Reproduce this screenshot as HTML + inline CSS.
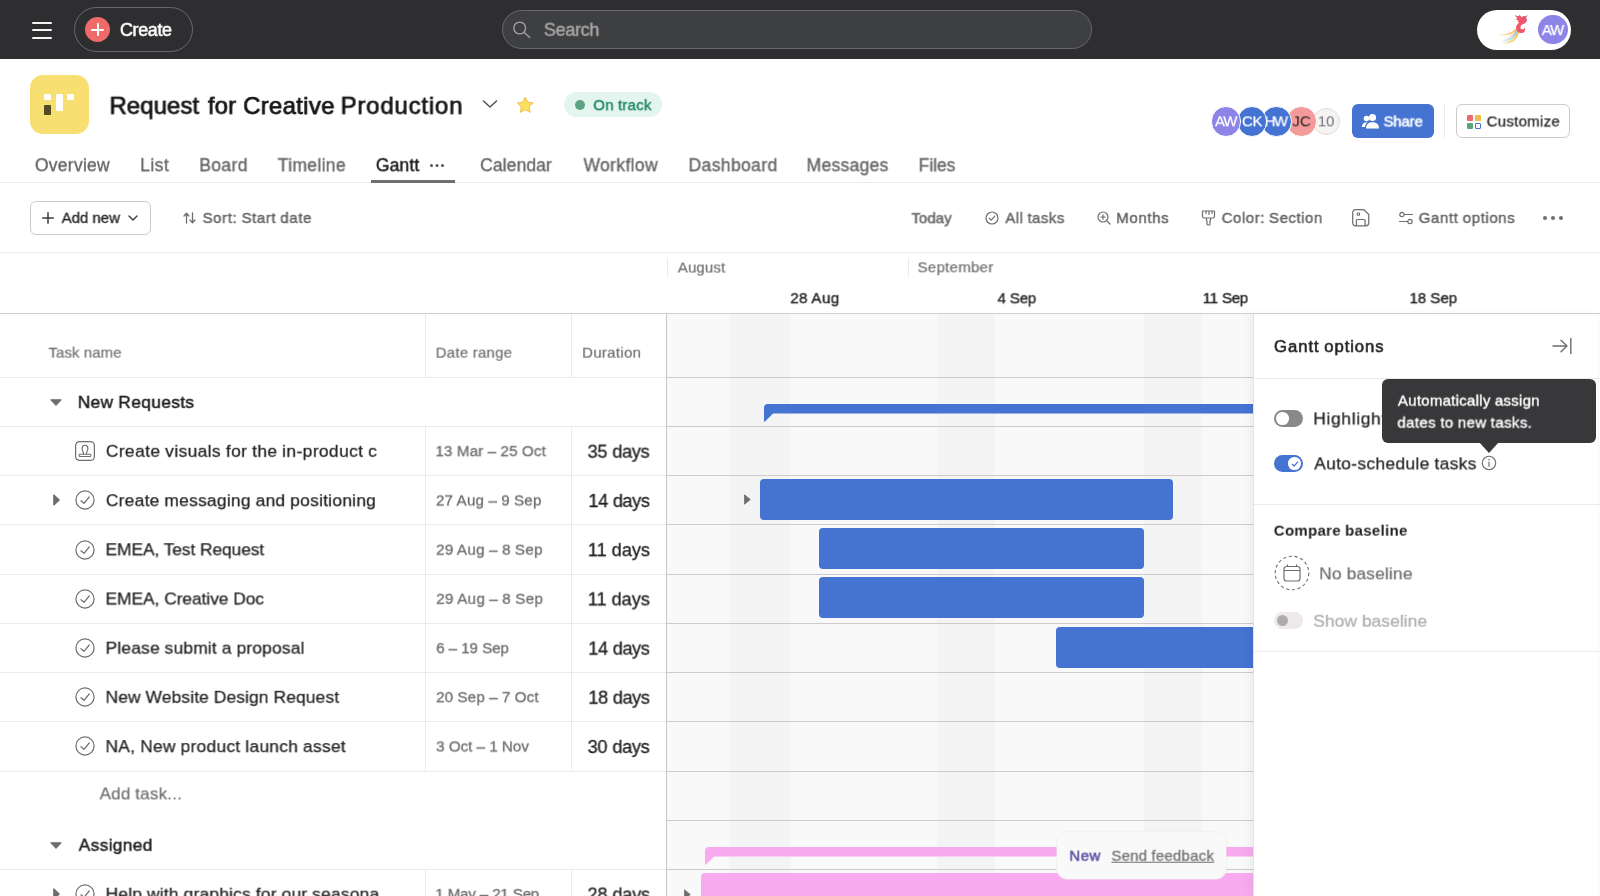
<!DOCTYPE html>
<html lang="en"><head><meta charset="utf-8"><title>Request for Creative Production – Gantt</title>
<style>
*{box-sizing:border-box;margin:0;padding:0}
html,body{width:1600px;height:896px;overflow:hidden;background:#fff;font-family:"Liberation Sans",sans-serif;}
.a{position:absolute}
.t{will-change:transform;position:absolute;white-space:nowrap;line-height:20px;height:20px;z-index:12}
#topbar{position:absolute;left:0;top:0;width:1600px;height:59px;background:#2e2e30}
.hl{position:absolute;height:1px;background:#ebe9e9}
.vl{position:absolute;width:1px;background:#ebe9e9}
.bar{position:absolute;background:#4573d2;border-radius:4px}
.av{position:absolute;border-radius:50%;border:1px solid #fff}
.tog{position:absolute;width:29.2px;height:16.8px;border-radius:9px}
.tog i{position:absolute;top:2.1px;width:12.6px;height:12.6px;border-radius:50%;background:#fff}
svg{position:absolute;overflow:visible}

</style></head>
<body>
<!-- TOP BAR -->
<div id="topbar">
  <div class="a" style="left:32px;top:22.2px;width:20px;height:1.9px;background:#f5f4f3;border-radius:1px"></div>
  <div class="a" style="left:32px;top:29.1px;width:20px;height:1.9px;background:#f5f4f3;border-radius:1px"></div>
  <div class="a" style="left:32px;top:36.7px;width:20px;height:1.9px;background:#f5f4f3;border-radius:1px"></div>
  <div class="a" style="left:74px;top:7px;width:119px;height:45px;border:1px solid #6a696a;border-radius:23px"></div>
  <div class="a" style="left:85px;top:17.2px;width:25px;height:25px;border-radius:50%;background:#f06a6a"></div>
  <div class="a" style="left:91.2px;top:28.7px;width:12.6px;height:2px;background:#fff;border-radius:1px"></div>
  <div class="a" style="left:96.5px;top:23.4px;width:2px;height:12.6px;background:#fff;border-radius:1px"></div>
  <div class="a" style="left:502px;top:10px;width:590px;height:39px;border:1px solid #69696b;border-radius:20px;background:#3e3f41"></div>
  <svg style="left:512px;top:20px" width="20" height="20" viewBox="0 0 20 20"><circle cx="7.7" cy="8" r="5.9" fill="none" stroke="#a2a0a2" stroke-width="1.4"/><path d="M12 12.3 L17.7 17.4" stroke="#a2a0a2" stroke-width="1.4" stroke-linecap="round"/></svg>
  <div class="a" style="left:1477px;top:9.5px;width:94px;height:40px;border-radius:20px;background:#fff"></div>
  <svg style="left:1490px;top:10px" width="45" height="38" viewBox="1490 10 45 38">
    <defs>
      <linearGradient id="tg1" x1="1518" y1="0" x2="1496" y2="0" gradientUnits="userSpaceOnUse"><stop offset="0" stop-color="#f6b24a"/><stop offset="0.55" stop-color="#f9cf7c" stop-opacity="0.75"/><stop offset="1" stop-color="#fbe3b0" stop-opacity="0"/></linearGradient>
      <linearGradient id="tg2" x1="1518" y1="0" x2="1500" y2="0" gradientUnits="userSpaceOnUse"><stop offset="0" stop-color="#7fd0c4"/><stop offset="0.6" stop-color="#a5ddee" stop-opacity="0.7"/><stop offset="1" stop-color="#c9ecf5" stop-opacity="0"/></linearGradient>
      <linearGradient id="tg3" x1="1519" y1="0" x2="1502" y2="0" gradientUnits="userSpaceOnUse"><stop offset="0" stop-color="#f3c14f"/><stop offset="0.6" stop-color="#f7d67e" stop-opacity="0.8"/><stop offset="1" stop-color="#fbe9b8" stop-opacity="0"/></linearGradient>
      <linearGradient id="tg4" x1="1518" y1="0" x2="1504" y2="0" gradientUnits="userSpaceOnUse"><stop offset="0" stop-color="#f58aa0"/><stop offset="1" stop-color="#f9b9c5" stop-opacity="0"/></linearGradient>
    </defs>
    <path d="M1517.6 27.5 Q1512 36.5 1497 34.5" fill="none" stroke="url(#tg1)" stroke-width="1.8" stroke-linecap="round"/>
    <path d="M1517.4 29.5 Q1513 38.5 1502 38.8" fill="none" stroke="url(#tg4)" stroke-width="1.5" stroke-linecap="round"/>
    <path d="M1517.6 30.8 Q1514.5 40 1503 40.8" fill="none" stroke="url(#tg2)" stroke-width="1.8" stroke-linecap="round"/>
    <path d="M1518.2 32 Q1516.5 42 1504.5 43" fill="none" stroke="url(#tg3)" stroke-width="1.8" stroke-linecap="round"/>
    <path d="M1528.1 15.3 L1526 17.4 Q1527.6 19.6 1526.6 21.6 Q1525.4 23.6 1522.8 24.2 Q1520.6 24.8 1520.4 27.2 Q1520.4 29.6 1522.2 29.6 Q1523.8 29.4 1524.6 27.8 Q1525.8 30.6 1523.6 32.4 Q1520.6 34 1518 32 Q1515.2 29 1516.6 25.6 Q1517.6 23.4 1519.4 22.2 L1517.2 21.4 L1518.4 20.4 L1515.6 19.2 L1517.4 18.2 L1514.7 15.3 L1518.8 16.2 L1519.4 14.8 L1521.8 17.2 Q1523.2 15.8 1525.2 16.2 Z" fill="#f0566a"/>
    <circle cx="1524.3" cy="17.6" r="0.7" fill="#5b6fd6"/>
  </svg>
  <div class="a" style="left:1538.3px;top:14.7px;width:29.8px;height:29.8px;border-radius:50%;background:#8d84e8"></div>
</div>
<!-- HEADER -->
<div class="a" style="left:30px;top:75px;width:59px;height:59px;border-radius:13px;background:#f8df72"></div>
<div class="a" style="left:44.2px;top:105px;width:7.2px;height:10.3px;background:#544a25;border-radius:1px"></div>
<div class="a" style="left:44.2px;top:93.5px;width:7.2px;height:6.6px;background:#fff;border-radius:1px"></div>
<div class="a" style="left:55.5px;top:93.5px;width:7.2px;height:17.5px;background:#fff;border-radius:1px"></div>
<div class="a" style="left:66.8px;top:93.5px;width:7.2px;height:6.6px;background:#fff;border-radius:1px"></div>
<svg style="left:482px;top:98px" width="16" height="12" viewBox="0 0 16 12"><path d="M1.5 3 L8 9 L14.5 3" fill="none" stroke="#565557" stroke-width="1.6" stroke-linecap="round" stroke-linejoin="round"/></svg>
<svg style="left:515.5px;top:96px" width="18.5" height="18" viewBox="0 0 20 20"><path d="M10 1.2 L12.7 6.9 L18.9 7.7 L14.4 12 L15.5 18.2 L10 15.2 L4.5 18.2 L5.6 12 L1.1 7.7 L7.3 6.9 Z" fill="#fbe05f" stroke="#f0c04a" stroke-width="1.1" stroke-linejoin="round"/></svg>
<div class="a" style="left:564px;top:92px;width:98px;height:25px;border-radius:13px;background:#e4f4ee"></div>
<div class="a" style="left:575px;top:100px;width:10px;height:10px;border-radius:50%;background:#5da283"></div>
<!-- avatars -->
<div class="av" style="left:1312.5px;top:107.5px;width:27px;height:27px;background:#f5f4f3;border:1px solid #dedcdb;z-index:12"></div>
<div class="av" style="left:1286px;top:106px;width:30.5px;height:30.5px;background:#f49a9a;border-width:1.5px;z-index:14"></div>
<div class="av" style="left:1261px;top:106px;width:30.5px;height:30.5px;background:#4573d2;border-width:1.5px;z-index:16"></div>
<div class="av" style="left:1236.5px;top:106px;width:30.5px;height:30.5px;background:#4573d2;border-width:1.5px;z-index:18"></div>
<div class="av" style="left:1210.7px;top:106px;width:30.5px;height:30.5px;background:#8d84e8;border-width:1.5px;z-index:20"></div>
<div class="a" style="left:1352px;top:103.8px;width:82.3px;height:34.2px;border-radius:6px;background:#4573d2"></div>
<svg style="left:1362px;top:113px" width="17" height="16" viewBox="0 0 17 16"><circle cx="10.5" cy="4.5" r="3.6" fill="#fff"/><path d="M4 15.5 C4 11 7 9.3 10.5 9.3 C14 9.3 17 11 17 15.5 Z" fill="#fff"/><circle cx="4.5" cy="5.5" r="2.8" fill="#fff"/><path d="M0 14 C0 10.5 2 9.2 5.5 9.2 C4 10.5 3 12 3 14 Z" fill="#fff"/></svg>
<div class="vl" style="left:1444px;top:104px;height:34px"></div>
<div class="a" style="left:1455.8px;top:103.8px;width:114.4px;height:34.2px;border-radius:6px;border:1px solid #cfcbcb;background:#fff"></div>
<div class="a" style="left:1467px;top:115px;width:6px;height:6px;background:#f06a6a;border-radius:1px"></div>
<div class="a" style="left:1475px;top:115px;width:6px;height:6px;background:#f1bd4a;border-radius:1px"></div>
<div class="a" style="left:1467px;top:123px;width:6px;height:6px;background:#5da283;border-radius:1px"></div>
<div class="a" style="left:1475px;top:123px;width:6px;height:6px;border:1.5px solid #4573d2;border-radius:1px"></div>
<!-- tabs -->
<div class="a" style="left:430px;top:164px;width:3px;height:3px;border-radius:50%;background:#565557;box-shadow:5.5px 0 0 #565557,11px 0 0 #565557"></div>
<div class="hl" style="left:0;top:182.3px;width:1600px"></div>
<div class="a" style="left:370.5px;top:180.4px;width:84.2px;height:2.7px;background:#6d6e6f"></div>
<!-- TOOLBAR -->
<div class="a" style="left:30px;top:201px;width:121px;height:34px;border:1px solid #cfcbcb;border-radius:6px"></div>
<svg style="left:42px;top:212px" width="12" height="12" viewBox="0 0 12 12"><path d="M6 0.7 V11.3 M0.7 6 H11.3" stroke="#3a3b3d" stroke-width="1.5" stroke-linecap="round"/></svg>
<svg style="left:128px;top:214px" width="10" height="8" viewBox="0 0 10 8"><path d="M1 2 L5 6 L9 2" fill="none" stroke="#3a3b3d" stroke-width="1.4" stroke-linecap="round" stroke-linejoin="round"/></svg>
<svg style="left:183px;top:212px" width="13" height="12" viewBox="0 0 13 12"><path d="M3.5 11 V1.5 M1 4 L3.5 1.2 L6 4 M9.5 1 V10.5 M7 8 L9.5 10.8 L12 8" fill="none" stroke="#6d6e6f" stroke-width="1.3" stroke-linecap="round" stroke-linejoin="round"/></svg>
<svg style="left:985px;top:211px" width="14" height="14" viewBox="0 0 14 14"><circle cx="7" cy="7" r="6" fill="none" stroke="#6d6e6f" stroke-width="1.2"/><path d="M4.3 7.2 L6.3 9.1 L9.8 5.2" fill="none" stroke="#6d6e6f" stroke-width="1.2" stroke-linecap="round" stroke-linejoin="round"/></svg>
<svg style="left:1097px;top:211px" width="14" height="14" viewBox="0 0 14 14"><circle cx="6" cy="6" r="5" fill="none" stroke="#6d6e6f" stroke-width="1.2"/><path d="M9.7 9.7 L13 13 M6 3.8 V8.2 M3.8 6 H8.2" fill="none" stroke="#6d6e6f" stroke-width="1.2" stroke-linecap="round"/></svg>
<svg style="left:1201px;top:210px" width="15" height="16" viewBox="0 0 15 16"><path d="M1.5 1 H13.5 V6.5 Q13.5 8 12 8 H3 Q1.5 8 1.5 6.5 Z M5.5 8 V10 Q5.5 10.8 6 11 V14 Q6 15 7.5 15 Q9 15 9 14 V11 Q9.5 10.8 9.5 10 V8 M5 1 V3.5 M8 1 V4.5 M11 1 V3.5" fill="none" stroke="#6d6e6f" stroke-width="1.2" stroke-linejoin="round" stroke-linecap="round"/></svg>
<svg style="left:1352px;top:209.3px" width="17.5" height="17.5" viewBox="0 0 17 17"><path d="M0.7 3.7 Q0.7 0.7 3.7 0.7 H11.6 L16.3 5.4 V13.3 Q16.3 16.3 13.3 16.3 H3.7 Q0.7 16.3 0.7 13.3 Z M4.3 16.2 V11.2 Q4.3 10.2 5.3 10.2 H11.7 Q12.7 10.2 12.7 11.2 V16.2" fill="none" stroke="#6d6e6f" stroke-width="1.2" stroke-linejoin="round"/><rect x="5.1" y="3.9" width="2.2" height="2.2" rx="0.4" fill="none" stroke="#6d6e6f" stroke-width="1"/></svg>
<svg style="left:1399px;top:211px" width="14" height="14" viewBox="0 0 14 14"><path d="M5.5 3.5 H13.5 M0.5 10.5 H8.5" stroke="#6d6e6f" stroke-width="1.2" stroke-linecap="round"/><circle cx="3" cy="3.5" r="2.2" fill="none" stroke="#6d6e6f" stroke-width="1.2"/><circle cx="11" cy="10.5" r="2.2" fill="none" stroke="#6d6e6f" stroke-width="1.2"/></svg>
<div class="a" style="left:1543px;top:216px;width:4px;height:4px;border-radius:50%;background:#6d6e6f;box-shadow:8px 0 0 #6d6e6f,16px 0 0 #6d6e6f"></div>
<div class="hl" style="left:0;top:252px;width:1600px"></div>
<!-- TIMELINE HEADER -->
<div class="vl" style="left:667.3px;top:257.5px;height:18.5px"></div>
<div class="vl" style="left:908.3px;top:257.5px;height:18.5px"></div>
<div class="hl" style="left:0;top:313.2px;width:1600px;background:#cfcdcd;height:1.2px"></div>
<!-- GANTT AREA -->
<div class="a" id="gantt" style="left:667px;top:314px;width:587px;height:582px;background:#faf9f9;overflow:hidden">
  <div class="a" style="left:63.3px;top:0;width:59.7px;height:582px;background:#f5f4f4"></div>
  <div class="a" style="left:270.3px;top:0;width:58px;height:582px;background:#f5f4f4"></div>
  <div class="a" style="left:476.8px;top:0;width:58.4px;height:582px;background:#f5f4f4"></div>
</div>
<!-- TABLE LINES -->
<div class="vl" style="left:425px;top:314px;height:64px"></div>
<div class="vl" style="left:571px;top:314px;height:64px"></div>
<div class="vl" style="left:425px;top:427px;height:344px"></div>
<div class="vl" style="left:571px;top:427px;height:344px"></div>
<div class="vl" style="left:425px;top:870px;height:26px"></div>
<div class="vl" style="left:571px;top:870px;height:26px"></div>
<div class="hl" style="left:0;top:377px;width:1254px"></div>
<div class="hl" style="left:0;top:426px;width:1254px"></div>
<div class="hl" style="left:0;top:475px;width:1254px"></div>
<div class="hl" style="left:0;top:524px;width:1254px"></div>
<div class="hl" style="left:0;top:573.5px;width:1254px"></div>
<div class="hl" style="left:0;top:623px;width:1254px"></div>
<div class="hl" style="left:0;top:672px;width:1254px"></div>
<div class="hl" style="left:0;top:721px;width:1254px"></div>
<div class="hl" style="left:0;top:770.5px;width:1254px"></div>
<div class="hl" style="left:667px;top:819.5px;width:587px"></div>
<div class="hl" style="left:0;top:869px;width:1254px"></div>
<div class="hl" style="left:667px;top:377px;width:587px;background:#cdcbcb"></div>
<div class="hl" style="left:667px;top:426px;width:587px;background:#cdcbcb"></div>
<div class="hl" style="left:667px;top:475px;width:587px;background:#cdcbcb"></div>
<div class="hl" style="left:667px;top:524px;width:587px;background:#cdcbcb"></div>
<div class="hl" style="left:667px;top:573.5px;width:587px;background:#cdcbcb"></div>
<div class="hl" style="left:667px;top:623px;width:587px;background:#cdcbcb"></div>
<div class="hl" style="left:667px;top:672px;width:587px;background:#cdcbcb"></div>
<div class="hl" style="left:667px;top:721px;width:587px;background:#cdcbcb"></div>
<div class="hl" style="left:667px;top:770.5px;width:587px;background:#cdcbcb"></div>
<div class="hl" style="left:667px;top:819.5px;width:587px;background:#cdcbcb"></div>
<div class="hl" style="left:667px;top:869px;width:587px;background:#cdcbcb"></div>
<div class="vl" style="left:666px;top:314px;height:582px;background:#c9c7c7;width:1px"></div>
<!-- GANTT BARS -->
<svg style="left:764px;top:404px" width="490" height="18" viewBox="0 0 490 18"><path d="M0 4 Q0 0 4 0 H490 V9.5 H9 L1 17.5 Q0 18 0 17 Z" fill="#4573d2"/></svg>
<div class="bar" style="left:760px;top:479px;width:413px;height:41px"></div>
<div class="bar" style="left:819px;top:528px;width:325px;height:41px"></div>
<div class="bar" style="left:819px;top:577px;width:325px;height:41px"></div>
<div class="bar" style="left:1056px;top:627px;width:198px;height:41px;border-radius:4px 0 0 4px"></div>
<svg style="left:705px;top:847.3px" width="549" height="18" viewBox="0 0 549 18"><path d="M0 4 Q0 0 4 0 H549 V9.5 H9 L1 17.5 Q0 18 0 17 Z" fill="#f9aaef"/></svg>
<div class="bar" style="left:700.5px;top:873px;width:553.5px;height:41px;border-radius:4px 0 0 4px;background:#f9aaef"></div>
<svg style="left:743.7px;top:494.3px" width="7" height="11" viewBox="0 0 7 11"><path d="M0.5 0.8 L6.3 5.5 L0.5 10.2 Z" fill="#6d6e6f" stroke="#6d6e6f" stroke-width="0.8" stroke-linejoin="round"/></svg>
<svg style="left:684px;top:888.5px" width="7" height="11" viewBox="0 0 7 11"><path d="M0.5 0.8 L6.3 5.5 L0.5 10.2 Z" fill="#6d6e6f" stroke="#6d6e6f" stroke-width="0.8" stroke-linejoin="round"/></svg>
<!-- ROW ICONS -->
<svg style="left:50px;top:398.9px" width="12" height="7" viewBox="0 0 12 7"><path d="M1 0.8 H11 L6 6.2 Z" fill="#6d6e6f" stroke="#6d6e6f" stroke-width="1.2" stroke-linejoin="round"/></svg>
<svg style="left:50px;top:842.2px" width="12" height="7" viewBox="0 0 12 7"><path d="M1 0.8 H11 L6 6.2 Z" fill="#6d6e6f" stroke="#6d6e6f" stroke-width="1.2" stroke-linejoin="round"/></svg>
<svg style="left:75px;top:441.2px" width="20" height="20" viewBox="0 0 20 20"><rect x="0.6" y="0.6" width="18.8" height="18.8" rx="4" fill="none" stroke="#6d6e6f" stroke-width="1.2"/><path d="M8.6 13.2 C8.6 11 7.1 9.6 7.1 7.4 C7.1 5.5 8.3 4.3 10 4.3 C11.7 4.3 12.9 5.5 12.9 7.4 C12.9 9.6 11.4 11 11.4 13.2 M4.2 13.8 Q4.2 13.2 4.8 13.2 H15.2 Q15.8 13.2 15.8 13.8 V14.9 Q15.8 15.5 15.2 15.5 H4.8 Q4.2 15.5 4.2 14.9 Z" fill="none" stroke="#6d6e6f" stroke-width="1.1" stroke-linejoin="round"/></svg>
<svg style="left:74.8px;top:490.3px" width="20" height="20" viewBox="0 0 20 20"><circle cx="10" cy="10" r="9.1" fill="none" stroke="#6d6e6f" stroke-width="1.2"/><path d="M6 10.7 L9 13.3 L14.2 7" fill="none" stroke="#6d6e6f" stroke-width="1.2" stroke-linecap="round" stroke-linejoin="round"/></svg>
<svg style="left:74.8px;top:539.5px" width="20" height="20" viewBox="0 0 20 20"><circle cx="10" cy="10" r="9.1" fill="none" stroke="#6d6e6f" stroke-width="1.2"/><path d="M6 10.7 L9 13.3 L14.2 7" fill="none" stroke="#6d6e6f" stroke-width="1.2" stroke-linecap="round" stroke-linejoin="round"/></svg>
<svg style="left:74.8px;top:588.7px" width="20" height="20" viewBox="0 0 20 20"><circle cx="10" cy="10" r="9.1" fill="none" stroke="#6d6e6f" stroke-width="1.2"/><path d="M6 10.7 L9 13.3 L14.2 7" fill="none" stroke="#6d6e6f" stroke-width="1.2" stroke-linecap="round" stroke-linejoin="round"/></svg>
<svg style="left:74.8px;top:637.9px" width="20" height="20" viewBox="0 0 20 20"><circle cx="10" cy="10" r="9.1" fill="none" stroke="#6d6e6f" stroke-width="1.2"/><path d="M6 10.7 L9 13.3 L14.2 7" fill="none" stroke="#6d6e6f" stroke-width="1.2" stroke-linecap="round" stroke-linejoin="round"/></svg>
<svg style="left:74.8px;top:687.1px" width="20" height="20" viewBox="0 0 20 20"><circle cx="10" cy="10" r="9.1" fill="none" stroke="#6d6e6f" stroke-width="1.2"/><path d="M6 10.7 L9 13.3 L14.2 7" fill="none" stroke="#6d6e6f" stroke-width="1.2" stroke-linecap="round" stroke-linejoin="round"/></svg>
<svg style="left:74.8px;top:736.3px" width="20" height="20" viewBox="0 0 20 20"><circle cx="10" cy="10" r="9.1" fill="none" stroke="#6d6e6f" stroke-width="1.2"/><path d="M6 10.7 L9 13.3 L14.2 7" fill="none" stroke="#6d6e6f" stroke-width="1.2" stroke-linecap="round" stroke-linejoin="round"/></svg>
<svg style="left:74.8px;top:883.9px" width="20" height="20" viewBox="0 0 20 20"><circle cx="10" cy="10" r="9.1" fill="none" stroke="#6d6e6f" stroke-width="1.2"/><path d="M6 10.7 L9 13.3 L14.2 7" fill="none" stroke="#6d6e6f" stroke-width="1.2" stroke-linecap="round" stroke-linejoin="round"/></svg>
<svg style="left:53px;top:494.3px" width="7" height="12" viewBox="0 0 7 12"><path d="M0.8 1 V11 L6.2 6 Z" fill="#6d6e6f" stroke="#6d6e6f" stroke-width="1.2" stroke-linejoin="round"/></svg>
<svg style="left:53px;top:887.9px" width="7" height="12" viewBox="0 0 7 12"><path d="M0.8 1 V11 L6.2 6 Z" fill="#6d6e6f" stroke="#6d6e6f" stroke-width="1.2" stroke-linejoin="round"/></svg>
<!-- OPTIONS PANEL -->
<div class="a" id="panel" style="left:1254px;top:314px;width:346px;height:582px;background:#fff;box-shadow:-1px 0 0 #e4e2e2,-4px 0 8px rgba(0,0,0,0.05);z-index:10"></div>
<div class="a" style="left:0;top:313.2px;width:1600px;height:1.2px;background:#cfcdcd;z-index:11"></div>
<div class="hl" style="left:1254px;top:378px;width:346px;z-index:11"></div>
<div class="hl" style="left:1254px;top:504px;width:346px;z-index:11"></div>
<div class="hl" style="left:1254px;top:651px;width:346px;z-index:11"></div>
<div class="vl" style="left:1598px;top:314px;height:582px;z-index:11;background:#f7f6f6"></div>
<svg style="left:1552px;top:337px;z-index:11" width="20" height="18" viewBox="0 0 20 18"><path d="M1 9 H14.5 M9 3.2 L15 9 L9 14.8 M18.8 1.5 V16.5" fill="none" stroke="#6d6e6f" stroke-width="1.4" stroke-linecap="round" stroke-linejoin="round"/></svg>
<div class="tog" style="left:1274px;top:410.2px;background:#8a898a;z-index:11"><i style="left:2px"></i></div>
<div class="tog" style="left:1274px;top:455.2px;background:#4573d2;z-index:11"><i style="left:14.3px"></i>
  <svg style="left:16.6px;top:4.4px" width="8" height="8" viewBox="0 0 8 8"><path d="M1.3 4.3 L3.2 6 L6.8 1.9" fill="none" stroke="#4573d2" stroke-width="1.2" stroke-linecap="round" stroke-linejoin="round"/></svg>
</div>
<svg style="left:1481px;top:455px;z-index:11" width="16" height="16" viewBox="0 0 16 16"><circle cx="8" cy="8" r="6.7" fill="none" stroke="#6d6e6f" stroke-width="1.1"/><path d="M8 7 V11.3" stroke="#6d6e6f" stroke-width="1.2" stroke-linecap="round"/><circle cx="8" cy="4.8" r="0.8" fill="#6d6e6f"/></svg>
<svg style="left:1274px;top:555px;z-index:11" width="36" height="36" viewBox="0 0 36 36"><circle cx="18" cy="18" r="16.8" fill="none" stroke="#6d6e6f" stroke-width="1.1" stroke-dasharray="3.2 2.6"/><path d="M10 14 Q10 11.5 12.5 11.5 H23.5 Q26 11.5 26 14 V23.5 Q26 26 23.5 26 H12.5 Q10 26 10 23.5 Z M10 15.5 H26 M13.5 11.5 V9.8 M22.5 11.5 V9.8" fill="none" stroke="#6d6e6f" stroke-width="1.2" stroke-linecap="round" stroke-linejoin="round"/></svg>
<div class="tog" style="left:1274px;top:612.3px;background:#edeae9;z-index:11"><i style="left:2.8px;top:2.7px;width:11.4px;height:11.4px;background:#afabac"></i></div>
<!-- TOOLTIP -->
<div class="a" style="left:1382px;top:379px;width:214px;height:64px;border-radius:6px;background:#38373a;z-index:20"></div>
<svg style="left:1479px;top:442px;z-index:20" width="20" height="11" viewBox="0 0 20 11"><path d="M0 0 H20 L10 11 Z" fill="#38373a"/></svg>
<!-- FEEDBACK PILL -->
<div class="a" style="left:1057.3px;top:832.1px;width:169px;height:46.8px;border-radius:10px;background:#faf9f9;box-shadow:0 0 0 1px rgba(237,234,233,0.5);z-index:9"></div>

<div id="texts">
<span class="t" style="left:119px;top:19px;transform:translate(0.94px,0.93px) rotate(0.002deg);font-size:18px;color:#fff;-webkit-text-stroke:0.5px #fff;letter-spacing:-0.382px;">Create</span>
<span class="t" style="left:543px;top:19px;transform:translate(0.84px,0.84px) rotate(0.002deg);font-size:18px;color:#a6a5a6;-webkit-text-stroke:0.4px #a6a5a6;letter-spacing:-0.294px;">Search</span>
<span class="t" style="left:1541px;top:19px;transform:translate(0.80px,0.95px) rotate(0.002deg);font-size:15px;color:#fff;-webkit-text-stroke:0.25px #fff;letter-spacing:-1.210px;">AW</span>
<span class="t" style="left:109px;top:95px;transform:translate(0.46px,0.81px) rotate(0.002deg);font-size:24px;color:#151618;-webkit-text-stroke:0.75px #151618;letter-spacing:0.037px;">Request</span>
<span class="t" style="left:207px;top:95px;transform:translate(0.87px,0.80px) rotate(0.002deg);font-size:24px;color:#151618;-webkit-text-stroke:0.75px #151618;letter-spacing:0.111px;">for</span>
<span class="t" style="left:243px;top:95px;transform:translate(0.19px,0.99px) rotate(0.002deg);font-size:24px;color:#151618;-webkit-text-stroke:0.75px #151618;letter-spacing:0.273px;">Creative</span>
<span class="t" style="left:340px;top:95px;transform:translate(0.63px,0.81px) rotate(0.002deg);font-size:24px;color:#151618;-webkit-text-stroke:0.75px #151618;letter-spacing:0.783px;">Production</span>
<span class="t" style="left:593px;top:95px;transform:translate(0.29px,0.19px) rotate(0.002deg);font-size:15px;color:#0d7f56;-webkit-text-stroke:0.3px #0d7f56;letter-spacing:0.257px;word-spacing:-0.257px;">On track</span>
<span class="t" style="left:1215px;top:111px;transform:translate(0.00px,0.35px) rotate(0.002deg);font-size:15px;color:#fff;-webkit-text-stroke:0.2px #fff;letter-spacing:-1.110px;z-index:21;">AW</span>
<span class="t" style="left:1242px;top:111px;transform:translate(0.00px,0.35px) rotate(0.002deg);font-size:15px;color:#fff;-webkit-text-stroke:0.2px #fff;letter-spacing:-0.344px;z-index:19;">CK</span>
<span class="t" style="left:1264px;top:111px;transform:translate(0.60px,0.35px) rotate(0.002deg);font-size:15px;color:#fff;-webkit-text-stroke:0.2px #fff;letter-spacing:-1.501px;z-index:17;">HW</span>
<span class="t" style="left:1292px;top:111px;transform:translate(0.30px,0.35px) rotate(0.002deg);font-size:15px;color:#1e1f21;letter-spacing:0.156px;z-index:15;">JC</span>
<span class="t" style="left:1317px;top:111px;transform:translate(0.80px,0.35px) rotate(0.002deg);font-size:15px;color:#6d6e6f;letter-spacing:-0.088px;z-index:13;">10</span>
<span class="t" style="left:1383px;top:111px;transform:translate(0.52px,0.50px) rotate(0.002deg);font-size:15px;color:#fff;-webkit-text-stroke:0.45px #fff;letter-spacing:-0.194px;">Share</span>
<span class="t" style="left:1486px;top:111px;transform:translate(0.64px,0.45px) rotate(0.002deg);font-size:15px;color:#1e1f21;-webkit-text-stroke:0.25px #1e1f21;letter-spacing:0.273px;">Customize</span>
<span class="t" style="left:34px;top:155px;transform:translate(0.96px,0.25px) rotate(0.002deg);font-size:17.5px;color:#646566;-webkit-text-stroke:0.35px #646566;letter-spacing:0.246px;">Overview</span>
<span class="t" style="left:140px;top:155px;transform:translate(0.19px,0.22px) rotate(0.002deg);font-size:17.5px;color:#646566;-webkit-text-stroke:0.35px #646566;letter-spacing:0.457px;">List</span>
<span class="t" style="left:199px;top:155px;transform:translate(0.32px,0.24px) rotate(0.002deg);font-size:17.5px;color:#646566;-webkit-text-stroke:0.35px #646566;letter-spacing:0.354px;">Board</span>
<span class="t" style="left:277px;top:155px;transform:translate(0.67px,0.29px) rotate(0.002deg);font-size:17.5px;color:#646566;-webkit-text-stroke:0.35px #646566;letter-spacing:0.350px;">Timeline</span>
<span class="t" style="left:480px;top:155px;transform:translate(0.19px,0.25px) rotate(0.002deg);font-size:17.5px;color:#646566;-webkit-text-stroke:0.35px #646566;letter-spacing:0.097px;">Calendar</span>
<span class="t" style="left:583px;top:155px;transform:translate(0.56px,0.21px) rotate(0.002deg);font-size:17.5px;color:#646566;-webkit-text-stroke:0.35px #646566;letter-spacing:0.343px;">Workflow</span>
<span class="t" style="left:688px;top:155px;transform:translate(0.55px,0.24px) rotate(0.002deg);font-size:17.5px;color:#646566;-webkit-text-stroke:0.35px #646566;letter-spacing:0.384px;">Dashboard</span>
<span class="t" style="left:806px;top:155px;transform:translate(0.56px,0.28px) rotate(0.002deg);font-size:17.5px;color:#646566;-webkit-text-stroke:0.35px #646566;letter-spacing:0.302px;">Messages</span>
<span class="t" style="left:918px;top:155px;transform:translate(0.63px,0.29px) rotate(0.002deg);font-size:17.5px;color:#646566;-webkit-text-stroke:0.35px #646566;letter-spacing:-0.059px;">Files</span>
<span class="t" style="left:375px;top:155px;transform:translate(0.89px,0.20px) rotate(0.002deg);font-size:17.5px;color:#1e1f21;-webkit-text-stroke:0.45px #1e1f21;letter-spacing:0.112px;">Gantt</span>
<span class="t" style="left:61px;top:207px;transform:translate(0.64px,0.92px) rotate(0.002deg);font-size:15px;color:#1e1f21;-webkit-text-stroke:0.3px #1e1f21;letter-spacing:-0.022px;word-spacing:0.022px;">Add new</span>
<span class="t" style="left:202px;top:208px;transform:translate(0.59px,0.00px) rotate(0.002deg);font-size:15px;color:#646566;-webkit-text-stroke:0.45px #646566;letter-spacing:0.609px;word-spacing:-0.609px;">Sort: Start date</span>
<span class="t" style="left:911px;top:208px;transform:translate(0.44px,0.23px) rotate(0.002deg);font-size:15px;color:#646566;-webkit-text-stroke:0.45px #646566;letter-spacing:0.051px;">Today</span>
<span class="t" style="left:1005px;top:208px;transform:translate(0.37px,0.11px) rotate(0.002deg);font-size:15px;color:#646566;-webkit-text-stroke:0.45px #646566;letter-spacing:0.441px;word-spacing:-0.441px;">All tasks</span>
<span class="t" style="left:1116px;top:208px;transform:translate(0.18px,0.07px) rotate(0.002deg);font-size:15px;color:#646566;-webkit-text-stroke:0.45px #646566;letter-spacing:0.667px;">Months</span>
<span class="t" style="left:1221px;top:207px;transform:translate(0.67px,0.96px) rotate(0.002deg);font-size:15px;color:#646566;-webkit-text-stroke:0.45px #646566;letter-spacing:0.529px;word-spacing:-0.529px;">Color: Section</span>
<span class="t" style="left:1418px;top:207px;transform:translate(0.68px,0.98px) rotate(0.002deg);font-size:15px;color:#646566;-webkit-text-stroke:0.45px #646566;letter-spacing:0.624px;word-spacing:-0.624px;">Gantt options</span>
<span class="t" style="left:677px;top:257px;transform:translate(0.80px,0.55px) rotate(0.002deg);font-size:15px;color:#6d6e6f;-webkit-text-stroke:0.2px #6d6e6f;letter-spacing:0.126px;">August</span>
<span class="t" style="left:917px;top:257px;transform:translate(0.56px,0.33px) rotate(0.002deg);font-size:15px;color:#6d6e6f;-webkit-text-stroke:0.2px #6d6e6f;letter-spacing:0.286px;">September</span>
<span class="t" style="left:790px;top:288px;transform:translate(0.32px,0.20px) rotate(0.002deg);font-size:15.2px;color:#1e1f21;-webkit-text-stroke:0.35px #1e1f21;letter-spacing:0.412px;word-spacing:-0.412px;">28 Aug</span>
<span class="t" style="left:997px;top:288px;transform:translate(0.53px,0.34px) rotate(0.002deg);font-size:15.2px;color:#1e1f21;-webkit-text-stroke:0.35px #1e1f21;letter-spacing:-0.297px;word-spacing:0.297px;">4 Sep</span>
<span class="t" style="left:1202px;top:288px;transform:translate(0.67px,0.17px) rotate(0.002deg);font-size:15.2px;color:#1e1f21;-webkit-text-stroke:0.35px #1e1f21;letter-spacing:-0.395px;word-spacing:0.395px;">11 Sep</span>
<span class="t" style="left:1409px;top:288px;transform:translate(0.48px,0.21px) rotate(0.002deg);font-size:15.2px;color:#1e1f21;-webkit-text-stroke:0.35px #1e1f21;letter-spacing:-0.122px;word-spacing:0.122px;">18 Sep</span>
<span class="t" style="left:48px;top:342px;transform:translate(0.49px,0.64px) rotate(0.002deg);font-size:15px;color:#6d6e6f;-webkit-text-stroke:0.2px #6d6e6f;letter-spacing:0.063px;word-spacing:-0.063px;">Task name</span>
<span class="t" style="left:435px;top:342px;transform:translate(0.64px,0.68px) rotate(0.002deg);font-size:15px;color:#6d6e6f;-webkit-text-stroke:0.2px #6d6e6f;letter-spacing:0.279px;word-spacing:-0.279px;">Date range</span>
<span class="t" style="left:582px;top:342px;transform:translate(0.13px,0.69px) rotate(0.002deg);font-size:15px;color:#6d6e6f;-webkit-text-stroke:0.2px #6d6e6f;letter-spacing:0.315px;">Duration</span>
<span class="t" style="left:77px;top:391px;transform:translate(0.78px,0.93px) rotate(0.002deg);font-size:17.3px;color:#1e1f21;-webkit-text-stroke:0.5px #1e1f21;letter-spacing:0.386px;word-spacing:-0.386px;">New Requests</span>
<span class="t" style="left:78px;top:834px;transform:translate(0.72px,0.80px) rotate(0.002deg);font-size:17.3px;color:#1e1f21;-webkit-text-stroke:0.5px #1e1f21;letter-spacing:0.357px;">Assigned</span>
<span class="t" style="left:105px;top:440px;transform:translate(0.86px,0.82px) rotate(0.002deg);font-size:17.4px;color:#1e1f21;-webkit-text-stroke:0.25px #1e1f21;letter-spacing:0.380px;word-spacing:-0.380px;">Create visuals for the in-product c</span>
<span class="t" style="left:435px;top:441px;transform:translate(0.43px,0.20px) rotate(0.002deg);font-size:15.2px;color:#6d6e6f;-webkit-text-stroke:0.3px #6d6e6f;letter-spacing:0.159px;word-spacing:-0.159px;">13 Mar – 25 Oct</span>
<span class="t" style="left:587px;top:441px;transform:translate(0.57px,0.74px) rotate(0.002deg);font-size:18.2px;color:#1e1f21;-webkit-text-stroke:0.3px #1e1f21;letter-spacing:-0.309px;word-spacing:0.309px;">35 days</span>
<span class="t" style="left:105px;top:490px;transform:translate(0.86px,0.20px) rotate(0.002deg);font-size:17.4px;color:#1e1f21;-webkit-text-stroke:0.25px #1e1f21;letter-spacing:0.252px;word-spacing:-0.252px;">Create messaging and positioning</span>
<span class="t" style="left:435px;top:490px;transform:translate(0.98px,0.47px) rotate(0.002deg);font-size:15.2px;color:#6d6e6f;-webkit-text-stroke:0.3px #6d6e6f;letter-spacing:0.174px;word-spacing:-0.174px;">27 Aug – 9 Sep</span>
<span class="t" style="left:588px;top:491px;transform:translate(0.40px,0.04px) rotate(0.002deg);font-size:18.2px;color:#1e1f21;-webkit-text-stroke:0.3px #1e1f21;letter-spacing:-0.433px;word-spacing:0.433px;">14 days</span>
<span class="t" style="left:105px;top:539px;transform:translate(0.51px,0.27px) rotate(0.002deg);font-size:17.4px;color:#1e1f21;-webkit-text-stroke:0.25px #1e1f21;letter-spacing:-0.097px;word-spacing:0.097px;">EMEA, Test Request</span>
<span class="t" style="left:436px;top:539px;transform:translate(0.14px,0.71px) rotate(0.002deg);font-size:15.2px;color:#6d6e6f;-webkit-text-stroke:0.3px #6d6e6f;letter-spacing:0.284px;word-spacing:-0.284px;">29 Aug – 8 Sep</span>
<span class="t" style="left:587px;top:540px;transform:translate(0.85px,0.18px) rotate(0.002deg);font-size:18.2px;color:#1e1f21;-webkit-text-stroke:0.3px #1e1f21;letter-spacing:-0.047px;word-spacing:0.047px;">11 days</span>
<span class="t" style="left:105px;top:588px;transform:translate(0.52px,0.48px) rotate(0.002deg);font-size:17.4px;color:#1e1f21;-webkit-text-stroke:0.25px #1e1f21;letter-spacing:-0.061px;word-spacing:0.061px;">EMEA, Creative Doc</span>
<span class="t" style="left:436px;top:588px;transform:translate(0.25px,0.81px) rotate(0.002deg);font-size:15.2px;color:#6d6e6f;-webkit-text-stroke:0.3px #6d6e6f;letter-spacing:0.319px;word-spacing:-0.319px;">29 Aug – 8 Sep</span>
<span class="t" style="left:587px;top:589px;transform:translate(0.77px,0.39px) rotate(0.002deg);font-size:18.2px;color:#1e1f21;-webkit-text-stroke:0.3px #1e1f21;letter-spacing:-0.059px;word-spacing:0.059px;">11 days</span>
<span class="t" style="left:105px;top:637px;transform:translate(0.56px,0.67px) rotate(0.002deg);font-size:17.4px;color:#1e1f21;-webkit-text-stroke:0.25px #1e1f21;letter-spacing:0.179px;word-spacing:-0.179px;">Please submit a proposal</span>
<span class="t" style="left:436px;top:638px;transform:translate(0.21px,0.23px) rotate(0.002deg);font-size:15.2px;color:#6d6e6f;-webkit-text-stroke:0.3px #6d6e6f;letter-spacing:-0.139px;word-spacing:0.139px;">6 – 19 Sep</span>
<span class="t" style="left:588px;top:638px;transform:translate(0.27px,0.66px) rotate(0.002deg);font-size:18.2px;color:#1e1f21;-webkit-text-stroke:0.3px #1e1f21;letter-spacing:-0.423px;word-spacing:0.423px;">14 days</span>
<span class="t" style="left:105px;top:686px;transform:translate(0.54px,0.81px) rotate(0.002deg);font-size:17.4px;color:#1e1f21;-webkit-text-stroke:0.25px #1e1f21;letter-spacing:0.129px;word-spacing:-0.129px;">New Website Design Request</span>
<span class="t" style="left:436px;top:687px;transform:translate(0.19px,0.21px) rotate(0.002deg);font-size:15.2px;color:#6d6e6f;-webkit-text-stroke:0.3px #6d6e6f;letter-spacing:0.126px;word-spacing:-0.126px;">20 Sep – 7 Oct</span>
<span class="t" style="left:588px;top:687px;transform:translate(0.34px,0.76px) rotate(0.002deg);font-size:18.2px;color:#1e1f21;-webkit-text-stroke:0.3px #1e1f21;letter-spacing:-0.424px;word-spacing:0.424px;">18 days</span>
<span class="t" style="left:105px;top:736px;transform:translate(0.50px,0.12px) rotate(0.002deg);font-size:17.4px;color:#1e1f21;-webkit-text-stroke:0.25px #1e1f21;letter-spacing:0.271px;word-spacing:-0.271px;">NA, New product launch asset</span>
<span class="t" style="left:436px;top:736px;transform:translate(0.13px,0.51px) rotate(0.002deg);font-size:15.2px;color:#6d6e6f;-webkit-text-stroke:0.3px #6d6e6f;letter-spacing:0.003px;word-spacing:-0.003px;">3 Oct – 1 Nov</span>
<span class="t" style="left:587px;top:737px;transform:translate(0.63px,0.04px) rotate(0.002deg);font-size:18.2px;color:#1e1f21;-webkit-text-stroke:0.3px #1e1f21;letter-spacing:-0.329px;word-spacing:0.329px;">30 days</span>
<span class="t" style="left:105px;top:883px;transform:translate(0.56px,0.69px) rotate(0.002deg);font-size:17.4px;color:#1e1f21;-webkit-text-stroke:0.25px #1e1f21;letter-spacing:0.209px;word-spacing:-0.209px;">Help with graphics for our seasona</span>
<span class="t" style="left:435px;top:884px;transform:translate(0.31px,0.10px) rotate(0.002deg);font-size:15.2px;color:#6d6e6f;-webkit-text-stroke:0.3px #6d6e6f;letter-spacing:-0.262px;word-spacing:0.262px;">1 May – 21 Sep</span>
<span class="t" style="left:587px;top:884px;transform:translate(0.46px,0.60px) rotate(0.002deg);font-size:18.2px;color:#1e1f21;-webkit-text-stroke:0.3px #1e1f21;letter-spacing:-0.204px;word-spacing:0.204px;">28 days</span>
<span class="t" style="left:99px;top:784px;transform:translate(0.64px,0.42px) rotate(0.002deg);font-size:17px;color:#6d6e6f;-webkit-text-stroke:0.2px #6d6e6f;letter-spacing:0.205px;word-spacing:-0.205px;">Add task...</span>
<span class="t" style="left:1273px;top:337px;transform:translate(0.94px,0.10px) rotate(0.002deg);font-size:16.8px;color:#1e1f21;-webkit-text-stroke:0.55px #1e1f21;letter-spacing:0.900px;word-spacing:-0.900px;">Gantt options</span>
<span class="t" style="left:1313px;top:408px;transform:translate(0.30px,0.39px) rotate(0.002deg);font-size:17.4px;color:#1e1f21;-webkit-text-stroke:0.25px #1e1f21;letter-spacing:0.666px;">Highlight</span>
<span class="t" style="left:1314px;top:453px;transform:translate(0.22px,0.34px) rotate(0.002deg);font-size:17.4px;color:#1e1f21;-webkit-text-stroke:0.25px #1e1f21;letter-spacing:0.326px;word-spacing:-0.326px;">Auto-schedule tasks</span>
<span class="t" style="left:1273px;top:520px;transform:translate(0.77px,0.68px) rotate(0.002deg);font-size:15px;color:#1e1f21;font-weight:700;letter-spacing:0.304px;word-spacing:-0.304px;">Compare baseline</span>
<span class="t" style="left:1319px;top:563px;transform:translate(0.20px,0.38px) rotate(0.002deg);font-size:17.4px;color:#6d6e6f;-webkit-text-stroke:0.2px #6d6e6f;letter-spacing:0.171px;word-spacing:-0.171px;">No baseline</span>
<span class="t" style="left:1313px;top:610px;transform:translate(0.24px,0.75px) rotate(0.002deg);font-size:17.4px;color:#afabac;-webkit-text-stroke:0.2px #afabac;letter-spacing:0.073px;word-spacing:-0.073px;">Show baseline</span>
<span class="t" style="left:1397px;top:390px;transform:translate(0.89px,0.69px) rotate(0.002deg);font-size:15px;color:#fff;-webkit-text-stroke:0.35px #fff;letter-spacing:0.270px;word-spacing:-0.270px;z-index:30;">Automatically assign</span>
<span class="t" style="left:1397px;top:412px;transform:translate(0.40px,0.69px) rotate(0.002deg);font-size:15px;color:#fff;-webkit-text-stroke:0.35px #fff;letter-spacing:0.408px;word-spacing:-0.408px;z-index:30;">dates to new tasks.</span>
<span class="t" style="left:1069px;top:845px;transform:translate(0.29px,0.78px) rotate(0.002deg);font-size:15px;color:#6457a8;-webkit-text-stroke:0.65px #6457a8;letter-spacing:0.563px;z-index:30;">New</span>
<span class="t" style="left:1111px;top:845px;transform:translate(0.42px,0.75px) rotate(0.002deg);font-size:15px;color:#6d6e6f;-webkit-text-stroke:0.25px #6d6e6f;letter-spacing:0.216px;word-spacing:-0.216px;z-index:30;text-decoration:underline;text-decoration-thickness:1px;text-underline-offset:1.2px;">Send feedback</span>
</div>
</body></html>
